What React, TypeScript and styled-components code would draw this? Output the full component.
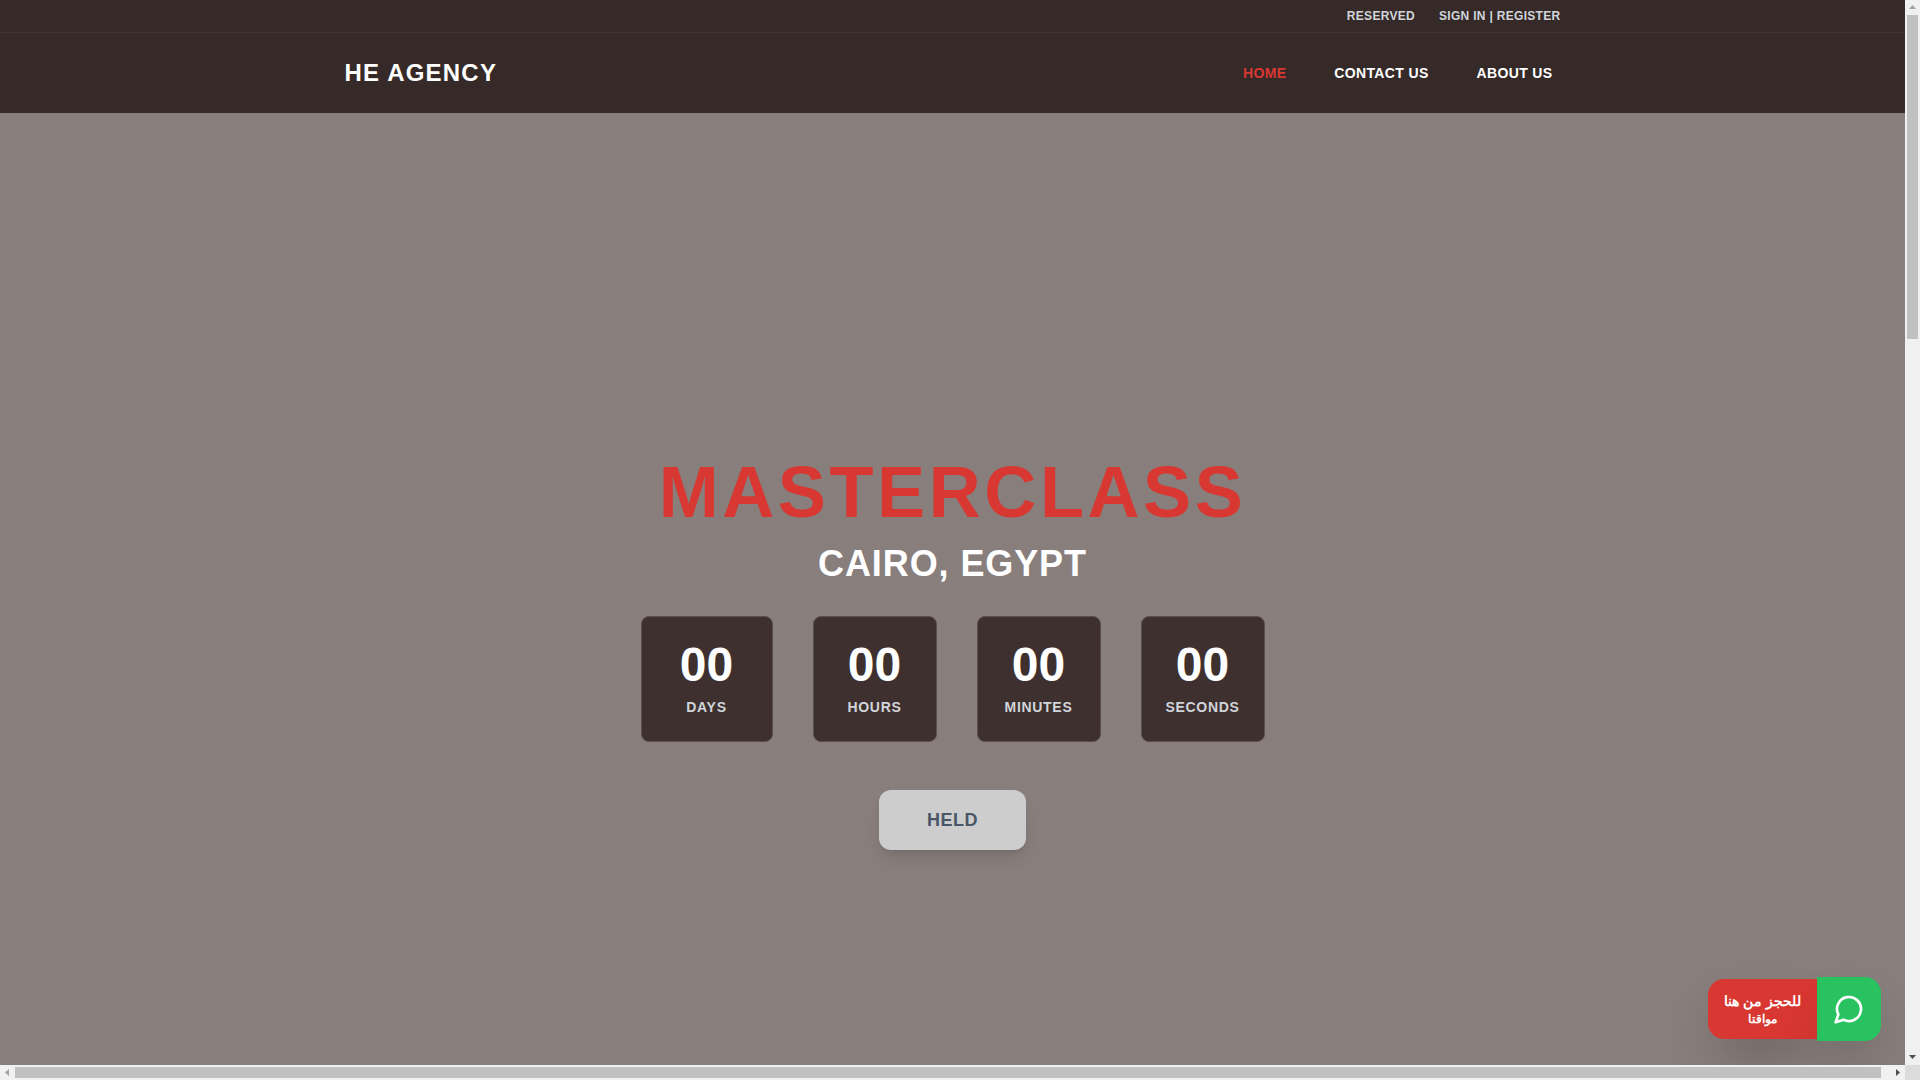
import React from "react";
import styled, { createGlobalStyle } from "styled-components";

const GlobalStyle = createGlobalStyle`
  *, *::before, *::after { box-sizing: border-box; }
  body {
    margin: 0;
    font-family: "Liberation Sans", Arial, sans-serif;
    color: #ffffff;
    overflow: hidden;
  }
  h1, h2, p { margin: 0; }
  a { color: inherit; text-decoration: none; }
  button { font-family: inherit; border: 0; cursor: pointer; }
`;

const Frame = styled.div`
  display: grid;
  grid-template-columns: minmax(0, 1fr) 15px;
  grid-template-rows: minmax(0, 1fr) 15px;
  height: 100vh;
`;

const Viewport = styled.div`
  position: relative;
  overflow: hidden;
  background: #887e7c;
`;

const Header = styled.header`
  background: #362a28;
`;

const TopBar = styled.div`
  border-bottom: 1px solid #3f343a;
`;

const Container = styled.div`
  max-width: 1280px;
  margin: 0 auto;
  padding: 0 32px;
`;

const TopLinks = styled(Container)`
  display: flex;
  justify-content: flex-end;
  gap: 24px;
  padding-top: 8px;
  padding-bottom: 8px;
`;

const TopLink = styled.a`
  font-size: 12px;
  line-height: 16px;
  font-weight: 700;
  letter-spacing: 0.025em;
  color: #d1d5db;
`;

const MainBar = styled(Container)`
  display: flex;
  align-items: center;
  justify-content: space-between;
  height: 80px;
`;

const Logo = styled.a`
  font-size: 24px;
  line-height: 32px;
  font-weight: 700;
  letter-spacing: 0.05em;
`;

const Nav = styled.nav`
  display: flex;
  gap: 32px;
`;

const NavLink = styled.a<{ $active?: boolean }>`
  padding: 8px;
  font-size: 14px;
  line-height: 20px;
  font-weight: 700;
  letter-spacing: 0.025em;
  color: ${(p) => (p.$active ? "#d93731" : "#ffffff")};
`;

const Hero = styled.main`
  display: flex;
  flex-direction: column;
  align-items: center;
  justify-content: center;
  min-height: 100vh;
  text-align: center;
`;

const Title = styled.h1`
  font-size: 72px;
  line-height: 72px;
  font-weight: 700;
  letter-spacing: 0.05em;
  color: #d93731;
`;

const Place = styled.h2`
  margin-top: 16px;
  font-size: 36px;
  line-height: 40px;
  font-weight: 700;
  letter-spacing: 0.025em;
`;

const Countdown = styled.div`
  display: flex;
  gap: 40px;
  margin-top: 32px;
`;

const Unit = styled.div<{ $wide?: boolean }>`
  width: ${(p) => (p.$wide ? 132 : 124)}px;
  padding: 24px 16px;
  border: 1px solid #5a504f;
  border-radius: 8px;
  background: #3d302e;
`;

const Amount = styled.div`
  font-size: 48px;
  line-height: 48px;
  font-weight: 700;
`;

const Label = styled.div`
  margin-top: 8px;
  font-size: 14px;
  line-height: 20px;
  font-weight: 700;
  letter-spacing: 0.05em;
  color: #d1d5db;
`;

const HeldButton = styled.button`
  margin-top: 48px;
  padding: 16px 48px;
  border-radius: 12px;
  background: #cdcdcd;
  color: #4a5568;
  font-size: 18px;
  line-height: 28px;
  font-weight: 700;
  letter-spacing: 0.025em;
  box-shadow: 0 10px 15px -3px rgba(0, 0, 0, 0.1), 0 4px 6px -4px rgba(0, 0, 0, 0.1);
`;

const Booking = styled.div`
  position: absolute;
  right: 24px;
  bottom: 24px;
  display: flex;
  align-items: center;
`;

const BookingText = styled.a`
  padding: 12px 16px;
  border-radius: 16px 0 0 16px;
  background: #d93731;
  font-weight: 700;
  text-align: center;
  box-shadow: 0 25px 50px -12px rgba(0, 0, 0, 0.25);
`;

const BookingTitle = styled.div`
  font-size: 14px;
  line-height: 20px;
`;

const BookingNote = styled.div`
  font-size: 12px;
  line-height: 16px;
`;

const ChatButton = styled.button`
  display: flex;
  align-items: center;
  justify-content: center;
  width: 64px;
  height: 64px;
  padding: 0;
  border-radius: 0 16px 16px 0;
  background: #29c261;
  color: #ffffff;
  box-shadow: 0 25px 50px -12px rgba(0, 0, 0, 0.25);
`;

const Track = styled.div<{ $vertical?: boolean }>`
  display: flex;
  flex-direction: ${(p) => (p.$vertical ? "column" : "row")};
  align-items: center;
  background: #f1f1f1;
`;

const ArrowBox = styled.svg`
  flex: none;
  width: 15px;
  height: 15px;
`;

const Lane = styled.div<{ $vertical?: boolean }>`
  flex: 1;
  display: flex;
  flex-direction: ${(p) => (p.$vertical ? "column" : "row")};
`;

const Thumb = styled.div<{ $vertical?: boolean; $share: string }>`
  background: #c1c1c1;
  ${(p) => (p.$vertical ? `width: 11px; height: ${p.$share};` : `height: 11px; width: ${p.$share};`)}
`;

const Corner = styled.div`
  background: #dcdcdc;
`;

function Arrow({ points, muted }: { points: string; muted?: boolean }) {
  return (
    <ArrowBox viewBox="0 0 15 15" aria-hidden="true">
      <polygon points={points} fill={muted ? "#a3a3a3" : "#505050"} />
    </ArrowBox>
  );
}

const units = [
  { label: "DAYS", wide: true },
  { label: "HOURS" },
  { label: "MINUTES" },
  { label: "SECONDS" },
];

export default function App() {
  return (
    <Frame>
      <GlobalStyle />
      <Viewport>
        <Header>
          <TopBar>
            <TopLinks>
              <TopLink href="#reserved">RESERVED</TopLink>
              <TopLink href="#sign-in">SIGN IN | REGISTER</TopLink>
            </TopLinks>
          </TopBar>
          <MainBar>
            <Logo href="#home">HE AGENCY</Logo>
            <Nav>
              <NavLink href="#home" $active>HOME</NavLink>
              <NavLink href="#contact">CONTACT US</NavLink>
              <NavLink href="#about">ABOUT US</NavLink>
            </Nav>
          </MainBar>
        </Header>
        <Hero>
          <Title>MASTERCLASS</Title>
          <Place>CAIRO, EGYPT</Place>
          <Countdown>
            {units.map((u) => (
              <Unit key={u.label} $wide={u.wide}>
                <Amount>00</Amount>
                <Label>{u.label}</Label>
              </Unit>
            ))}
          </Countdown>
          <HeldButton type="button">HELD</HeldButton>
        </Hero>
        <Booking>
          <BookingText href="#booking" dir="rtl" lang="ar">
            <BookingTitle>للحجز من هنا</BookingTitle>
            <BookingNote>مواقتا</BookingNote>
          </BookingText>
          <ChatButton type="button" aria-label="WhatsApp">
            <svg width="32" height="32" viewBox="0 0 24 24" fill="none" stroke="currentColor" strokeWidth="2" strokeLinecap="round" strokeLinejoin="round">
              <path d="M7.9 20A9 9 0 1 0 4 16.1L2 22Z" />
            </svg>
          </ChatButton>
        </Booking>
      </Viewport>
      <Track $vertical>
        <Arrow points="7.5,5 11,9 4,9" muted />
        <Lane $vertical>
          <Thumb $vertical $share="31.3%" />
        </Lane>
        <Arrow points="4,5 11,5 7.5,9" />
      </Track>
      <Track>
        <Arrow points="5,7.5 9,4 9,11" muted />
        <Lane>
          <Thumb $share="99.5%" />
        </Lane>
        <Arrow points="6,4 10,7.5 6,11" />
      </Track>
      <Corner />
    </Frame>
  );
}
